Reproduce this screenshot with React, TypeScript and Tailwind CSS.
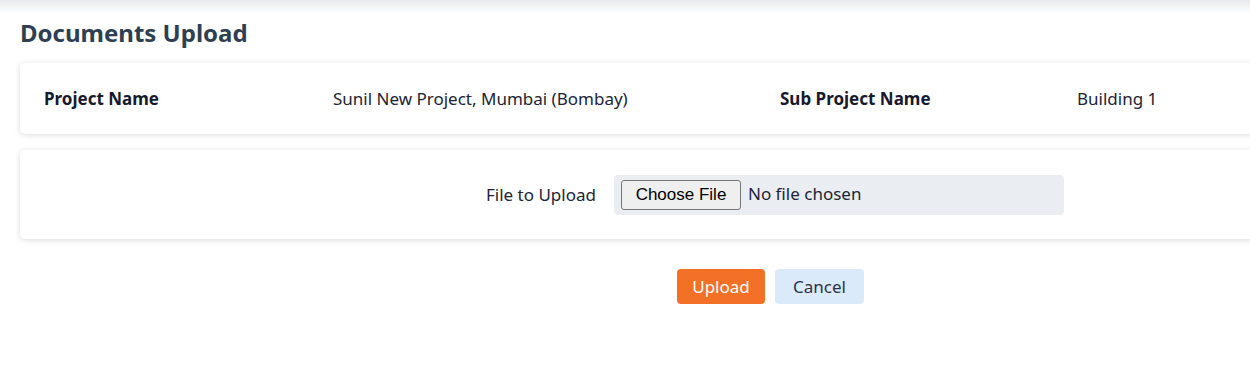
import React from 'react';

const font = "font-['Segoe_UI','Noto_Sans',sans-serif]";

const Card: React.FC<{ className?: string; children: React.ReactNode }> = ({ className = '', children }) => (
  <div className={`w-[1262px] rounded-[5px] bg-white shadow-[0_1px_6px_rgba(0,0,0,0.14)] ${className}`}>
    {children}
  </div>
);

const App: React.FC = () => {
  return (
    <div className={`w-[1250px] h-[368px] overflow-hidden bg-white ${font}`}>
      <div className="h-[14px] bg-gradient-to-b from-[#e6e9ec] to-white" />

      <div className="px-[20px]">
        <h1 className="mt-[3px] text-[24px] leading-[32px] font-bold text-[#2e3f52]">Documents Upload</h1>

        <Card className="mt-[14px] h-[71px] pl-[24px] grid grid-cols-[289px_447px_297px_1fr] items-center text-[17px]">
          <span className="font-bold text-[#171a2b]">Project Name</span>
          <span className="text-[#212435]">Sunil New Project, Mumbai (Bombay)</span>
          <span className="font-bold text-[#171a2b]">Sub Project Name</span>
          <span className="text-[#212435]">Building 1</span>
        </Card>

        <Card className="mt-[16px] h-[89px] flex items-center">
          <label htmlFor="doc-file" className="w-[594px] pr-[18px] text-right text-[17px] text-[#212435]">
            File to Upload
          </label>
          <div className="w-[450px] h-[40px] rounded-[4px] bg-[#eaeef3] flex items-center pl-[7px]">
            <input
              id="doc-file"
              type="file"
              className="text-[17px] text-[#212435] file:mr-[7px] file:h-[30px] file:w-[120px] file:rounded-[3px] file:border file:border-solid file:border-[#767676] file:bg-[#efefef] file:font-['Liberation_Sans',Arial,sans-serif] file:text-[17px] file:text-black"
            />
          </div>
        </Card>

        <div className="mt-[30px] pl-[657px] flex gap-[10px]">
          <button className="w-[88px] h-[35px] rounded-[4px] bg-[#f37126] text-white text-[17px]">Upload</button>
          <button className="w-[89px] h-[35px] rounded-[4px] bg-[#dbeafb] text-[#2a3447] text-[17px]">Cancel</button>
        </div>
      </div>
    </div>
  );
};

export default App;
